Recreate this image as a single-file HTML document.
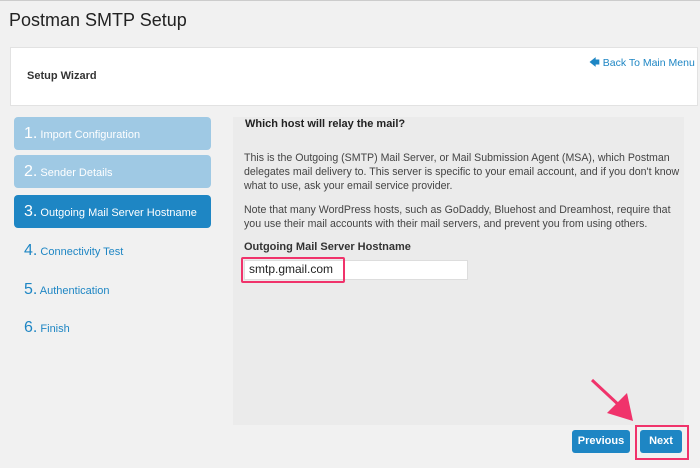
<!DOCTYPE html><html><head><style>
body{margin:0;width:700px;height:468px;background:#f1f1f1;font-family:"Liberation Sans",sans-serif;position:relative;overflow:hidden;color:#333}
.a{position:absolute}
.step{position:absolute;left:14px;width:197px;height:33px;border-radius:4px;color:#fff;font-size:11px;line-height:33px;box-sizing:border-box;padding-left:10px}
.step b{font-size:16px;font-weight:normal}
.lt{background:#9fc9e4}
.dk{background:#1e86c4}
.ln{position:absolute;left:24px;color:#1e86c4;font-size:11px}
.ln b{font-size:16px;font-weight:normal}
.t{position:absolute;left:244px;font-size:10.6px;color:#444;white-space:nowrap}
.btn{position:absolute;background:#1e86c4;color:#fff;font-size:11px;font-weight:bold;border-radius:3px;text-align:center;line-height:23px;height:23px}
</style></head><body>
<div class="a" style="top:0;left:0;width:700px;height:1px;background:#ccc"></div>
<div class="a" style="left:9px;top:10px;font-size:18px;color:#222">Postman SMTP Setup</div>
<div class="a" style="left:10px;top:47px;width:686px;height:57px;background:#fff;border:1px solid #e2e2e2"></div>
<div class="a" style="left:27px;top:70px;font-size:11px;font-weight:bold;color:#333">Setup Wizard</div>
<div class="a" style="left:589px;top:55px;font-size:10.5px;color:#1e86c4">&#129092; Back To Main Menu</div>
<div class="step lt" style="top:117px"><b>1.</b> Import Configuration</div>
<div class="step lt" style="top:155px"><b>2.</b> Sender Details</div>
<div class="step dk" style="top:195px"><b>3.</b> Outgoing Mail Server Hostname</div>
<div class="ln" style="top:242px"><b>4.</b> Connectivity Test</div>
<div class="ln" style="top:281px"><b>5.</b> Authentication</div>
<div class="ln" style="top:319px"><b>6.</b> Finish</div>
<div class="a" style="left:233px;top:117px;width:451px;height:308px;background:#ebebeb"></div>
<div class="a" style="left:245px;top:118px;font-size:11px;font-weight:bold;color:#222">Which host will relay the mail?</div>
<div class="t" style="top:152px">This is the Outgoing (SMTP) Mail Server, or Mail Submission Agent (MSA), which Postman</div>
<div class="t" style="top:166px">delegates mail delivery to. This server is specific to your email account, and if you don't know</div>
<div class="t" style="top:180px">what to use, ask your email service provider.</div>
<div class="t" style="top:204px">Note that many WordPress hosts, such as GoDaddy, Bluehost and Dreamhost, require that</div>
<div class="t" style="top:218px">you use their mail accounts with their mail servers, and prevent you from using others.</div>
<div class="t" style="top:241px;font-weight:bold;color:#333;font-size:11px">Outgoing Mail Server Hostname</div>
<div class="a" style="left:244px;top:260px;width:222px;height:18px;background:#fff;border:1px solid #ddd"></div>
<div class="a" style="left:241px;top:257px;width:100px;height:22px;border:2px solid #f0336b;border-radius:2px"></div>
<div class="a" style="left:249px;top:262px;font-size:12px;color:#222">smtp.gmail.com</div>
<svg class="a" style="left:585px;top:375px" width="60" height="55"><line x1="7" y1="5" x2="36" y2="32" stroke="#f0336b" stroke-width="3"/><polygon points="22,38 48,46 42,18" fill="#f0336b"/></svg>
<div class="btn" style="left:572px;top:430px;width:58px">Previous</div>
<div class="btn" style="left:640px;top:430px;width:42px">Next</div>
<div class="a" style="left:635px;top:425px;width:50px;height:31px;border:2px solid #f0336b"></div>
</body></html>
